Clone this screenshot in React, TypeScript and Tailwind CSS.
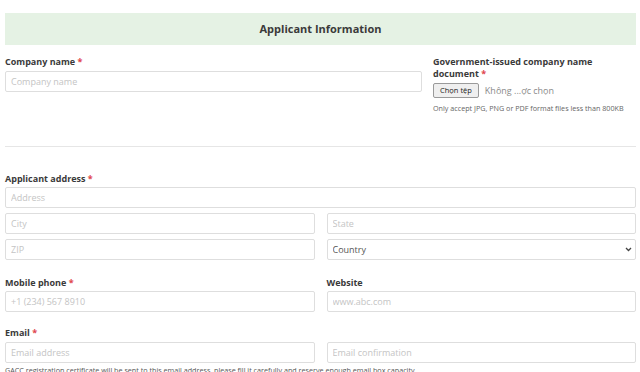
import React from 'react';

const inputCls =
  'block w-full h-[21px] border border-[#dedede] rounded-[2px] bg-white px-[5px] text-[9px] text-[#444] placeholder:text-[#c4c4c4] outline-none';

const Req = () => <span className="text-[#e0444c]"> *</span>;

const Label = ({ children, req }: { children: React.ReactNode; req?: boolean }) => (
  <div className="text-[9px] leading-[12px] font-bold text-[#3a3a3a]">
    {children}
    {req && <Req />}
  </div>
);

export default function App() {
  return (
    <div
      className="w-[640px] h-[372px] overflow-hidden bg-white pl-[5px] pr-[4px] pt-[13px]"
      style={{ fontFamily: '"Open Sans", "Noto Sans", sans-serif' }}
    >
      <div className="h-[32px] bg-[#e5f2e4] flex items-center justify-center text-[11px] font-bold text-[#3a3a3a]">
        Applicant Information
      </div>

      <div className="grid grid-cols-[417px_1fr] gap-x-[11px] mt-[11px]">
        <div>
          <Label req>Company name</Label>
          <input className={inputCls + ' mt-[3px]'} placeholder="Company name" />
        </div>
        <div>
          <Label req>Government-issued company name document</Label>
          <div className="flex items-center mt-[3px] gap-[6px]">
            <button className="h-[15px] px-[6px] border border-[#9a9a9a] rounded-[2px] bg-[#efefef] text-[7.5px] text-[#222] leading-none">
              Chọn tệp
            </button>
            <span className="text-[9px] text-[#8a8a8a]">Không ...ợc chọn</span>
          </div>
          <div className="mt-[6px] text-[7.2px] leading-[9px] text-[#666]">
            Only accept JPG, PNG or PDF format files less than 800KB
          </div>
        </div>
      </div>

      <div className="mt-[33px] border-t border-[#e6e6e6]" />

      <div className="mt-[26px]">
        <Label req>Applicant address</Label>
        <input className={inputCls + ' mt-[2px]'} placeholder="Address" />
        <div className="grid grid-cols-2 gap-x-[12px] gap-y-[5px] mt-[5px]">
          <input className={inputCls} placeholder="City" />
          <input className={inputCls} placeholder="State" />
          <input className={inputCls} placeholder="ZIP" />
          <div className="relative h-[21px]">
            <select className={inputCls + ' appearance-none text-[#555]'} defaultValue="">
              <option value="">Country</option>
            </select>
            <svg
              className="absolute right-[4px] top-[8px] pointer-events-none"
              width="7"
              height="5"
              viewBox="0 0 7 5"
            >
              <path d="M1 1l2.5 2.5L6 1" stroke="#444" strokeWidth="1.3" fill="none" />
            </svg>
          </div>
        </div>
      </div>

      <div className="grid grid-cols-2 gap-x-[12px] mt-[17px]">
        <div>
          <Label req>Mobile phone</Label>
          <input className={inputCls + ' mt-[2px]'} placeholder="+1 (234) 567 8910" />
        </div>
        <div>
          <Label>Website</Label>
          <input className={inputCls + ' mt-[2px]'} placeholder="www.abc.com" />
        </div>
      </div>

      <div className="mt-[15px]">
        <Label req>Email</Label>
        <div className="grid grid-cols-2 gap-x-[12px] mt-[3px]">
          <input className={inputCls} placeholder="Email address" />
          <input className={inputCls} placeholder="Email confirmation" />
        </div>
        <div className="mt-[3px] text-[7.2px] leading-[9px] text-[#555] whitespace-nowrap">
          GACC registration certificate will be sent to this email address, please fill it carefully and reserve enough email box capacity.
        </div>
      </div>
    </div>
  );
}
